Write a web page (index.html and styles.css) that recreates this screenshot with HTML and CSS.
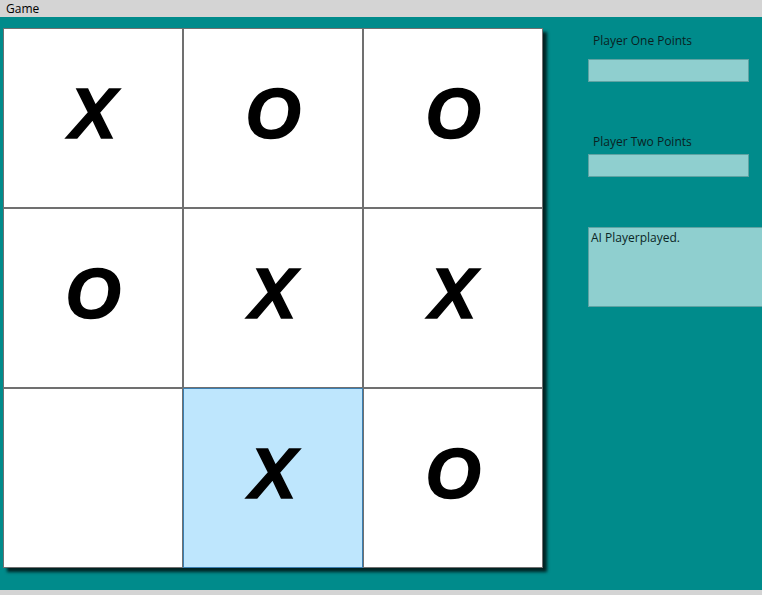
FILE: index.html
```html
<!DOCTYPE html>
<html>
<head>
<meta charset="utf-8">
<link rel="stylesheet" href="styles.css">
</head>
<body>
<div class="window">
  <div class="menubar"><span class="menu-item">Game</span></div>
  <div class="main">
    <div class="board">
      <div class="cell">X</div>
      <div class="cell">O</div>
      <div class="cell">O</div>
      <div class="cell">O</div>
      <div class="cell">X</div>
      <div class="cell">X</div>
      <div class="cell"></div>
      <div class="cell hover">X</div>
      <div class="cell">O</div>
    </div>
    <div class="panel">
      <div class="label first">Player One Points</div>
      <div class="textbox small one"></div>
      <div class="label second">Player Two Points</div>
      <div class="textbox small two"></div>
      <div class="textbox large">AI Playerplayed.</div>
    </div>
  </div>
  <div class="statusbar"></div>
</div>
</body>
</html>
```
FILE: styles.css
```css
html, body {
  margin: 0;
  padding: 0;
}
body {
  width: 762px;
  height: 595px;
  overflow: hidden;
  font-family: "Open Sans", "Noto Sans", sans-serif;
}
.window {
  display: flex;
  flex-direction: column;
  height: 595px;
}
.menubar {
  height: 17px;
  background: #d4d4d4;
  font-size: 12px;
  line-height: 17px;
  color: #000;
  padding-left: 6px;
  flex: none;
}
.main {
  flex: 1;
  background: #008b8b;
  display: flex;
  align-items: flex-start;
  overflow: hidden;
}
.statusbar {
  height: 5px;
  background: #d4d4d4;
  flex: none;
}
.board {
  margin-top: 11px;
  margin-left: 3px;
  display: grid;
  grid-template-columns: repeat(3, 180px);
  grid-template-rows: repeat(3, 180px);
  box-shadow: 4px 4px 3px rgba(0, 0, 0, 0.75);
  flex: none;
}
.cell {
  box-sizing: border-box;
  border: 1px solid #707070;
  background: #fff;
  display: flex;
  align-items: center;
  justify-content: center;
  padding-bottom: 9px;
  font-family: "Liberation Sans", Arial, sans-serif;
  font-weight: bold;
  font-style: italic;
  font-size: 71px;
  color: #000;
  -webkit-text-stroke: 1.5px #000;
}
.cell.hover {
  background: #bee6fd;
  border-color: #3c7fb1;
}
.panel {
  margin-left: 45px;
  padding-top: 16px;
  display: flex;
  flex-direction: column;
  flex: none;
  width: 200px;
}
.label {
  font-size: 12px;
  line-height: 16px;
  padding-left: 5px;
  color: #0a1f1f;
}
.label.second {
  margin-top: 52px;
}
.textbox {
  box-sizing: border-box;
  background: #8fcfcf;
  border: 1px solid #5fa3a3;
  font-size: 12px;
  line-height: 16px;
  color: #0a2626;
}
.textbox.small {
  width: 161px;
  height: 23px;
}
.textbox.one {
  margin-top: 10px;
}
.textbox.two {
  margin-top: 4px;
}
.textbox.large {
  width: 190px;
  height: 80px;
  margin-top: 50px;
  padding: 2px 0 0 2px;
}
```
